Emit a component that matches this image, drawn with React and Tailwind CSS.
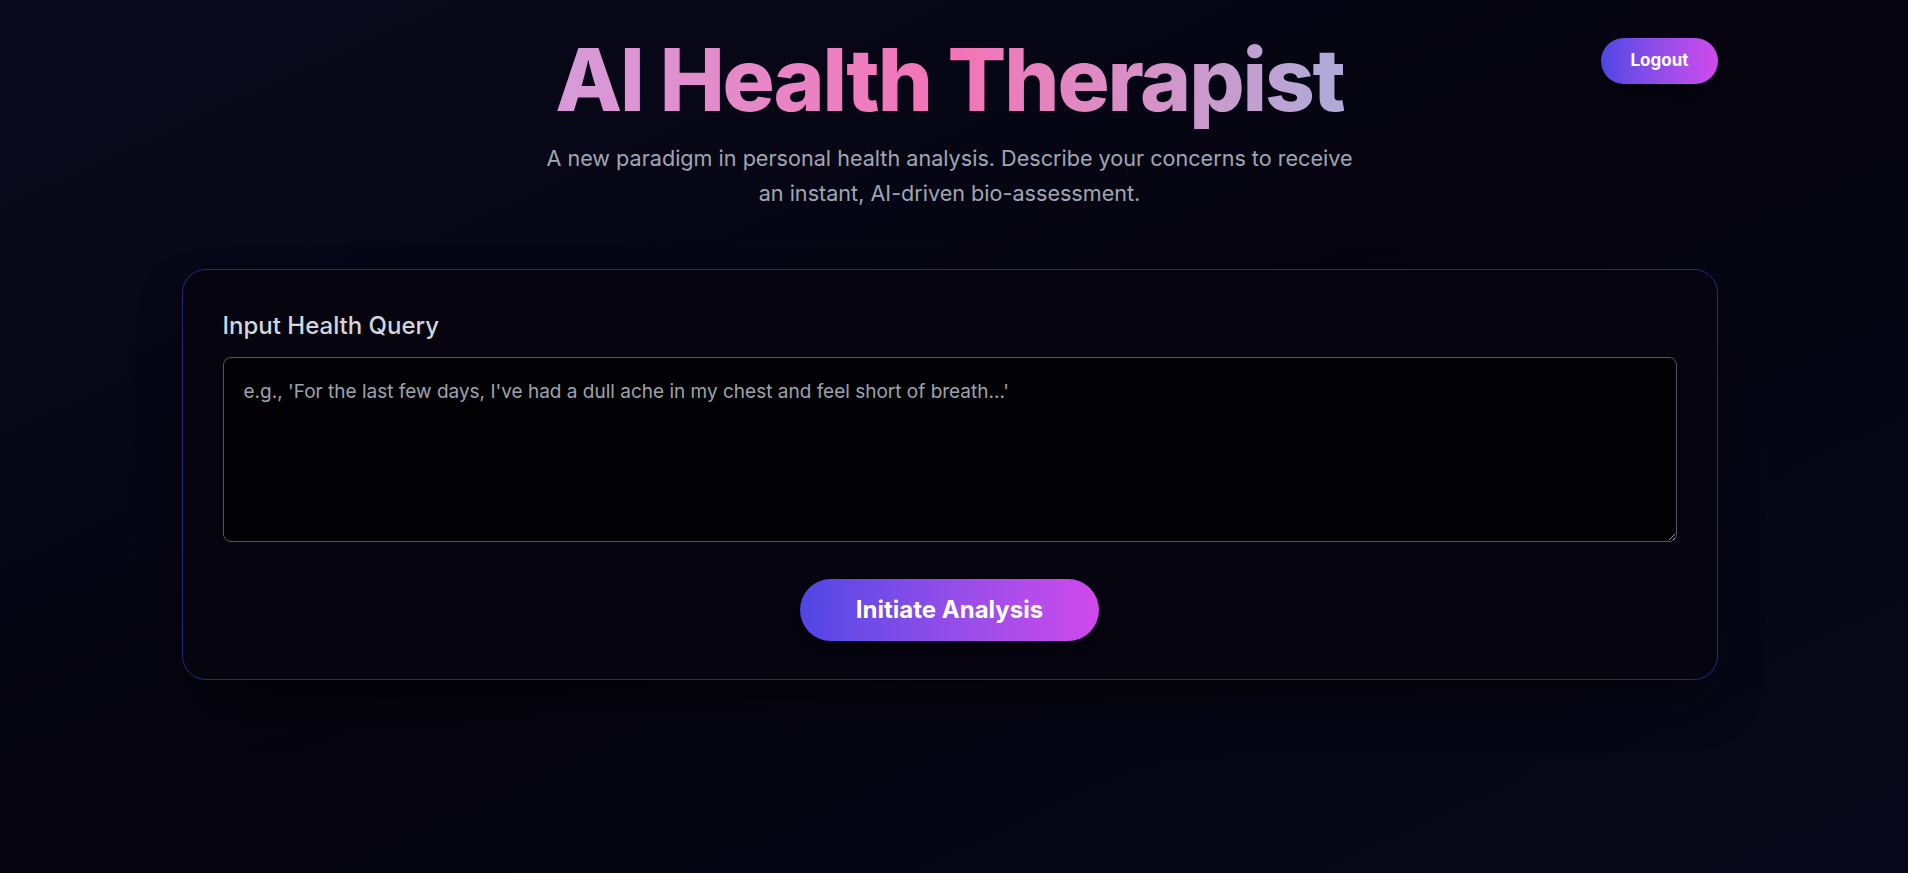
export default function App() {
  return (
    <div
      className="min-h-screen w-full bg-gradient-to-br from-[#0b0a1d] via-[#05040f] to-[#09081a] pr-[9px] text-white"
      style={{ fontFamily: "Inter, 'Noto Sans', sans-serif" }}
    >
      <div className="mx-auto w-[1536px] pt-8">
        {/* Header */}
        <div className="grid grid-cols-[1fr_auto_1fr] items-start">
          <div />
          <div className="flex flex-col items-center">
            <h1 className="bg-gradient-to-r from-[#d69bd9] via-[#f472b6] to-[#aeabd9] bg-clip-text text-[87px] font-extrabold leading-[1.11] tracking-tight text-transparent">
              AI Health Therapist
            </h1>
            <p className="mt-[12px] max-w-[822px] text-center text-[21.6px] leading-[1.63] text-[#a0a5b4]">
              A new paradigm in personal health analysis. Describe your concerns to receive an instant, AI-driven bio-assessment.
            </p>
          </div>
          <div className="flex justify-end">
            <button className="mt-1.5 rounded-full bg-gradient-to-r from-[#5046e5] to-[#d048ec] px-[29px] py-2.5 text-[17px] font-bold text-white shadow-lg">
              Logout
            </button>
          </div>
        </div>

        {/* Query card */}
        <div className="mt-[58px] rounded-3xl border border-[#2a2780] bg-[#05040f] px-10 pt-10 pb-[38px] shadow-2xl shadow-black/60">
          <label className="mb-[15px] block text-2xl font-medium text-gray-300">
            Input Health Query
          </label>
          <textarea
            className="block h-[185px] w-full resize-y rounded-lg border border-[#4b5563] bg-[#020205] p-5 text-[19px] text-gray-200 placeholder-[#9ca3af] outline-none"
            placeholder="e.g., 'For the last few days, I've had a dull ache in my chest and feel short of breath...'"
          />
          <div className="mt-[37px] flex justify-center">
            <button className="rounded-full bg-gradient-to-r from-[#5046e5] to-[#d048ec] px-14 py-[15px] text-2xl font-bold text-white shadow-lg">
              Initiate Analysis
            </button>
          </div>
        </div>
      </div>
    </div>
  );
}
